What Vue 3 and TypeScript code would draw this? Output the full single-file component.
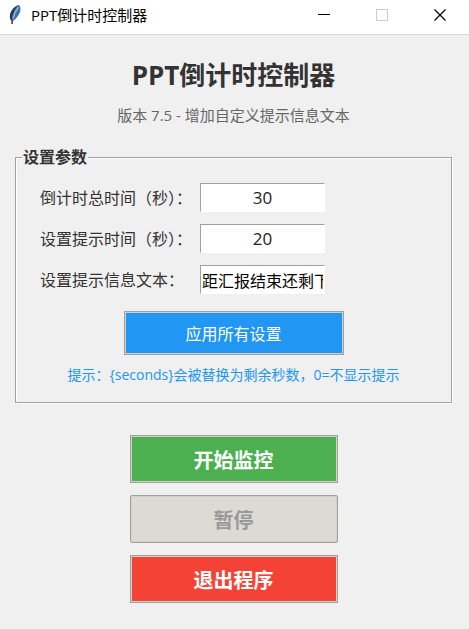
<script setup lang="ts">
import { ref } from 'vue'

const totalSeconds = ref('30')
const warnSeconds = ref('20')
const message = ref('距汇报结束还剩下')
const running = ref(false)
</script>

<template>
  <div class="window">
    <header class="titlebar">
      <svg class="feather" viewBox="0 0 16 22" aria-hidden="true">
        <path d="M5 20 L5.500 13" stroke="#333" stroke-width="1.500" fill="none" />
        <path d="M12 1 C8 2 4 6 3 11 C2.500 14 3 16 5 17.500 C8 16 11.500 12 13 8 C14 5 13.500 2.500 12 1Z" fill="#4470a8" />
        <path d="M12 1.200 C8 3.500 5.500 8 5 17 C3 15 2.300 12.500 3.500 9 C5 5 8 2.300 12 1.200Z" fill="#26364f" />
        <path d="M11.500 3 C9 6 7 10 6 14.500" stroke="#8fb4dc" stroke-width="1.500" fill="none" />
      </svg>
      <span class="caption">PPT倒计时控制器</span>
      <div class="controls">
        <button type="button" aria-label="最小化">
          <svg viewBox="0 0 12 12" shape-rendering="crispEdges"><path d="M0 5.500H12" stroke="#000" /></svg>
        </button>
        <button type="button" aria-label="最大化" disabled>
          <svg viewBox="0 0 12 12" shape-rendering="crispEdges"><rect x=".5" y=".5" width="11" height="11" fill="none" stroke="#ccc" /></svg>
        </button>
        <button type="button" aria-label="关闭">
          <svg viewBox="0 0 12 12"><path d="M.5 .5L11.500 11.500M11.500 .5L.5 11.500" stroke="#000" stroke-width="1.200" /></svg>
        </button>
      </div>
    </header>

    <main class="content">
      <h1>PPT倒计时控制器</h1>
      <p class="version">版本 7.5 - 增加自定义提示信息文本</p>

      <fieldset class="settings">
        <legend>设置参数</legend>
        <div class="fields">
          <label for="total">倒计时总时间（秒）：</label>
          <input id="total" v-model="totalSeconds" type="text" class="number" />
          <label for="warn">设置提示时间（秒）：</label>
          <input id="warn" v-model="warnSeconds" type="text" class="number" />
          <label for="message">设置提示信息文本：</label>
          <input id="message" v-model="message" type="text" />
        </div>
        <button type="button" class="btn apply">应用所有设置</button>
        <p class="hint">提示：{seconds}会被替换为剩余秒数，0=不显示提示</p>
      </fieldset>

      <div class="actions">
        <button type="button" class="btn start" @click="running = true">开始监控</button>
        <button type="button" class="btn pause" :disabled="!running">暂停</button>
        <button type="button" class="btn quit">退出程序</button>
      </div>
    </main>
  </div>
</template>

<style>
body {
  background: #f0f0f0;
}
</style>

<style scoped>
.window {
  min-height: 100vh;
  background: #f0f0f0;
  color: #333;
  font-family: "Open Sans", "Noto Sans CJK SC", sans-serif;
  font-size: 16px;
  line-height: 24px;
}
.window * {
  box-sizing: border-box;
}
button,
input {
  font-family: inherit;
}
.titlebar {
  display: flex;
  align-items: center;
  height: 35px;
  padding-left: 7px;
  padding-bottom: 4px;
  background: #fff;
  border-bottom: 1px solid #d8d8d8;
}
.feather {
  width: 16px;
  height: 22px;
  margin-right: 8px;
}
.caption {
  flex: 1;
  color: #000;
  font-size: 15px;
}
.controls {
  display: flex;
}
.controls button {
  display: flex;
  align-items: center;
  justify-content: center;
  width: 58px;
  height: 30px;
  padding: 0;
  border: 0;
  background: none;
}
.controls svg {
  width: 12px;
  height: 12px;
}
.content {
  display: flex;
  flex-direction: column;
  align-items: center;
  padding: 20px 17px 24px 15px;
}
h1 {
  margin: 0;
  font-size: 26px;
  line-height: 40px;
}
.version {
  margin: 8px 0 18px;
  color: #666;
  font-size: 15px;
}
.settings {
  display: flex;
  flex-direction: column;
  align-items: center;
  width: 100%;
  min-width: 0;
  margin: 0;
  padding: 14px 0 15px;
  border: 1px solid #a0a0a0;
  box-shadow: 1px 1px 0 #fff, inset 1px 1px 0 #fff;
}
legend {
  margin-left: 6px;
  padding: 0 1px;
  background: #f0f0f0;
  font-weight: bold;
}
.fields {
  display: grid;
  grid-template-columns: 160px 125px;
  row-gap: 12px;
  align-self: flex-start;
  align-items: center;
  padding-left: 24px;
}
.fields label {
  white-space: nowrap;
}
.fields input {
  width: 100%;
  height: 29px;
  padding: 0 1px;
  border: 1px solid;
  border-color: #a0a0a0 #fff #fff #a0a0a0;
  outline: 0;
  background: #fff;
  color: #000;
  font-size: 16px;
}
.fields .number {
  color: #222;
  font-size: 17px;
  text-align: center;
}
.btn {
  padding: 0;
  border: 1px solid #a0a09c;
  box-shadow: inset 0 0 0 1px #d0cfc8;
  color: #fff;
}
.apply {
  width: 220px;
  height: 44px;
  margin-top: 17px;
  background: #2196f3;
  font-size: 16px;
}
.hint {
  margin: 8px 0 0;
  color: #2196f3;
  font-size: 14px;
}
.actions {
  display: grid;
  grid-template-columns: 208px;
  gap: 12px;
  margin-top: 32px;
}
.actions .btn {
  height: 48px;
  font-size: 20px;
  font-weight: bold;
}
.start {
  background: #4caf50;
}
.actions .pause {
  border-radius: 2px;
  background: #dcdad5;
  color: #999;
}
.quit {
  background: #f44336;
}
</style>
